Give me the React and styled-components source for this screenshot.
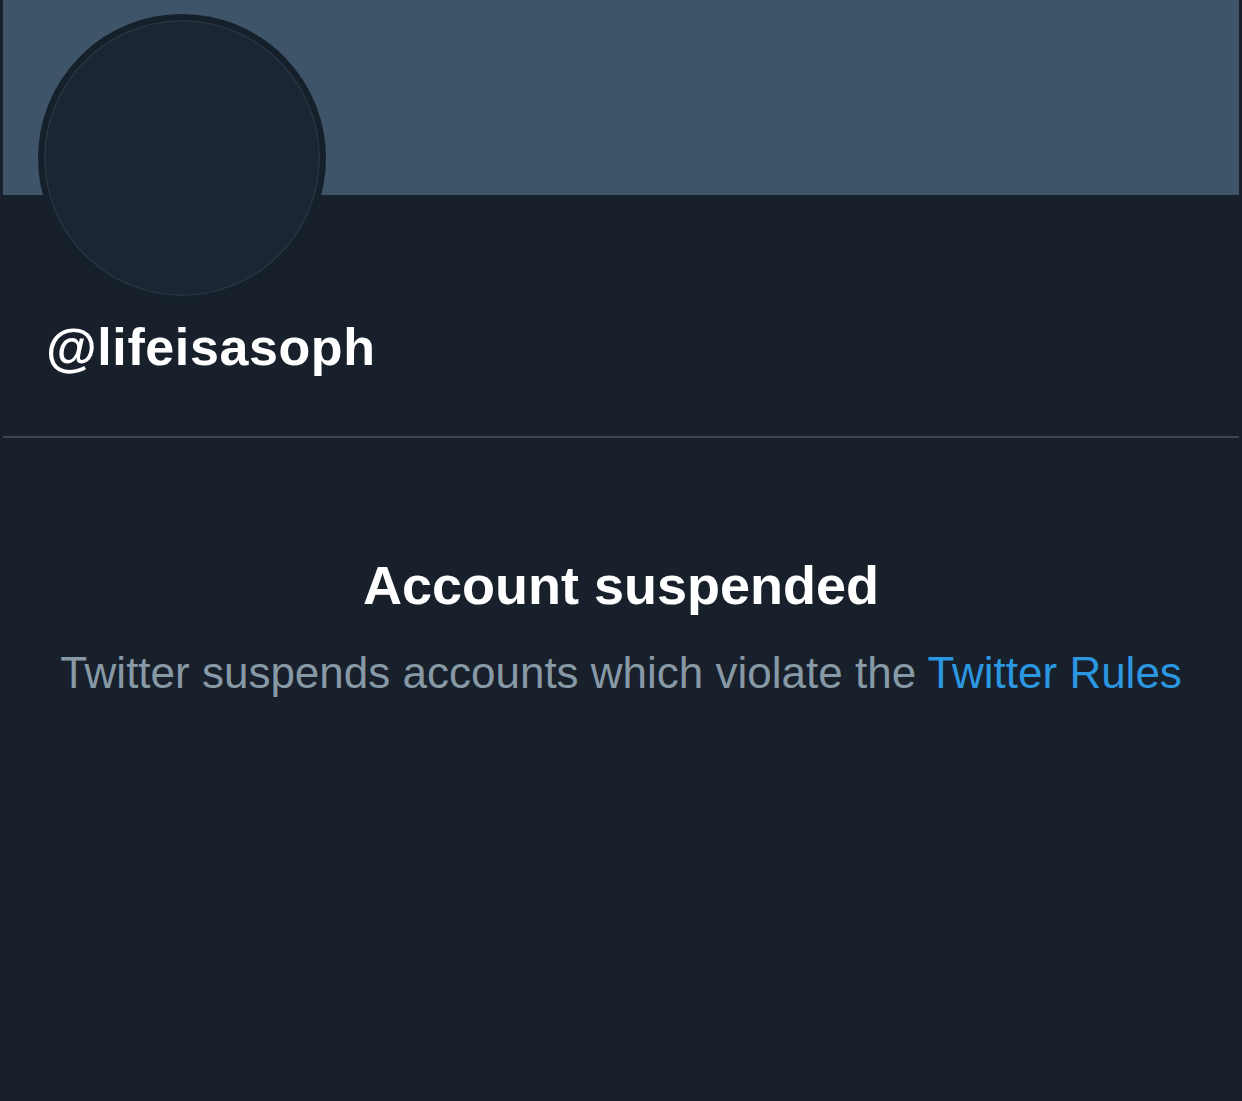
import React from "react";
import styled, { createGlobalStyle } from "styled-components";

const GlobalStyle = createGlobalStyle`
  html, body {
    margin: 0;
    padding: 0;
    background: #17202b;
  }
  body {
    font-family: "Liberation Sans", Arial, sans-serif;
    -webkit-font-smoothing: antialiased;
  }
`;

const Page = styled.div`
  width: 1242px;
  height: 1101px;
  background: #17202b;
  overflow: hidden;
`;

const Banner = styled.div`
  height: 195px;
  margin: 0 3px;
  background: #3e5469;
`;

const Profile = styled.div`
  padding: 0 0 0 38px;
`;

const Avatar = styled.div`
  width: 288px;
  height: 288px;
  margin-top: -181px;
  box-sizing: border-box;
  border-radius: 50%;
  background: #1b2533;
  border: 6px solid #16202b;
  box-shadow: inset 0 0 0 1.5px #2a3543;
`;

const Handle = styled.h2`
  margin: 15px 0 0 8px;
  font-size: 52px;
  line-height: 60px;
  font-weight: 700;
  color: #ffffff;
  letter-spacing: 0.6px;
`;

const Divider = styled.hr`
  margin: 59px 3px 0;
  border: 0;
  height: 2px;
  background: #3a4652;
`;

const Notice = styled.section`
  display: flex;
  flex-direction: column;
  align-items: center;
  padding-top: 116px;
`;

const Title = styled.h1`
  margin: 0;
  font-size: 54px;
  line-height: 62px;
  font-weight: 700;
  color: #ffffff;
`;

const Message = styled.p`
  margin: 31px 0 0;
  font-size: 44px;
  line-height: 52px;
  color: #8899a6;
`;

const RulesLink = styled.a`
  color: #2b97e0;
  text-decoration: none;
`;

export default function App() {
  return (
    <Page>
      <GlobalStyle />
      <Banner />
      <Profile>
        <Avatar />
        <Handle>@lifeisasoph</Handle>
      </Profile>
      <Divider />
      <Notice>
        <Title>Account suspended</Title>
        <Message>
          Twitter suspends accounts which violate the{" "}
          <RulesLink href="#">Twitter Rules</RulesLink>
        </Message>
      </Notice>
    </Page>
  );
}
